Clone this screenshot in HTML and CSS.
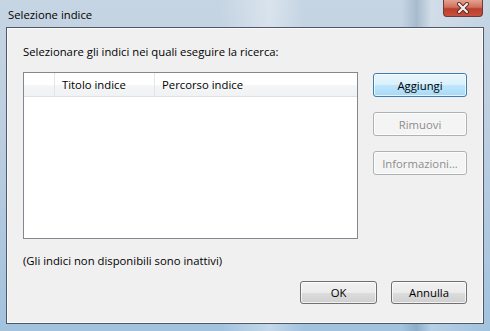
FILE: index.html
```html
<!DOCTYPE html>
<html>
<head>
    <link rel="stylesheet" href="styles.css">
</head>
<body>
    <div class="window">
        <div class="titlebar">
            <span class="title">Selezione indice</span>
            <div class="close-btn">
                <svg width="16" height="12" viewBox="0 0 16 12">
                    <path d="M4 2 L12 10 M12 2 L4 10" stroke="#5a2a2a" stroke-width="4" stroke-linecap="round"/>
                    <path d="M4 2 L12 10 M12 2 L4 10" stroke="#f4eeee" stroke-width="2.2" stroke-linecap="round"/>
                </svg>
            </div>
        </div>
        <div class="client">
            <div class="prompt">Selezionare gli indici nei quali eseguire la ricerca:</div>
            <div class="main">
                <div class="list">
                    <div class="list-header">
                        <div class="col col-check"></div>
                        <div class="col col-title">Titolo indice</div>
                        <div class="col col-path">Percorso indice</div>
                    </div>
                </div>
                <div class="side">
                    <button class="btn default">Aggiungi</button>
                    <button class="btn" disabled>Rimuovi</button>
                    <button class="btn" disabled>Informazioni...</button>
                </div>
            </div>
            <div class="note">(Gli indici non disponibili sono inattivi)</div>
            <div class="footer">
                <button class="btn btn-ok">OK</button>
                <button class="btn btn-cancel">Annulla</button>
            </div>
        </div>
    </div>
</body>
</html>
```

FILE: styles.css
```css
body {
    margin: 0;
    font-family: "Open Sans", "Noto Sans", sans-serif;
    font-size: 11.3px;
    color: #000;
}

.window {
    width: 490px;
    height: 331px;
    box-sizing: border-box;
    display: flex;
    flex-direction: column;
    padding: 0 6px 7px 6px;
    background:
        linear-gradient(90deg, rgba(255,255,255,0) 0%, rgba(255,255,255,0) 45%, rgba(255,255,255,0.35) 55%, rgba(255,255,255,0) 62%, rgba(255,255,255,0) 82%, rgba(80,110,140,0.25) 85%, rgba(255,255,255,0.2) 88%, rgba(255,255,255,0) 100%),
        linear-gradient(180deg, #c6d5e3 0%, #bccee0 40%, #a2c2de 100%);
}

.titlebar {
    height: 27px;
    display: flex;
    justify-content: space-between;
    align-items: flex-start;
}

.title {
    margin-top: 7px;
    margin-left: 2px;
    color: #000;
}

.close-btn {
    width: 40px;
    height: 17px;
    margin-right: 1px;
    box-sizing: border-box;
    border: 1px solid #6b3a3a;
    border-top: none;
    border-radius: 0 0 4px 4px;
    background: linear-gradient(180deg, #e3a291 0%, #d0705c 45%, #b8402c 55%, #c9503a 100%);
    display: flex;
    justify-content: center;
    align-items: center;
}

.client {
    flex: 1;
    display: flex;
    flex-direction: column;
    padding: 16px 15px 19px 16px;
    background-color: #f0f0f0;
    border: 1px solid #4d5966;
    box-shadow: inset 0 0 0 1px #fafafa;
}

.prompt,
.note {
    line-height: 15px;
}

.main {
    display: flex;
    gap: 15px;
    margin-top: 13px;
}

.list {
    width: 335px;
    height: 167px;
    box-sizing: border-box;
    background-color: #fff;
    border: 1px solid #828790;
}

.list-header {
    display: flex;
    height: 23px;
    background: linear-gradient(180deg, #ffffff 0%, #ffffff 50%, #f4f5f7 55%, #f1f2f4 100%);
    border-bottom: 1px solid #dfe0e3;
}

.col {
    box-sizing: border-box;
    line-height: 23px;
    padding-left: 7px;
    border-right: 1px solid #e4e5e8;
}

.col-check {
    width: 31px;
}

.col-title {
    width: 100px;
}

.col-path {
    width: 90px;
    border-right: none;
}

.side {
    display: flex;
    flex-direction: column;
    gap: 15px;
    margin-top: 1px;
}

.btn {
    width: 94px;
    height: 24px;
    padding: 0;
    font-family: inherit;
    font-size: inherit;
    color: #000;
    border: 1px solid #707070;
    border-radius: 3px;
    background: linear-gradient(180deg, #f2f2f2 0%, #ebebeb 50%, #dddddd 51%, #cfcfcf 100%);
    box-shadow: inset 0 0 0 1px rgba(255,255,255,0.7);
}

.btn.default {
    border-color: #3c7fb1;
    background: linear-gradient(180deg, #eaf6fd 0%, #d9f0fc 50%, #bee6fd 51%, #a7d9f5 100%);
}

.btn:disabled {
    color: #8d8d8d;
    border-color: #adb2b5;
    background: #f4f4f4;
    box-shadow: inset 0 0 0 1px #fcfcfc;
}

.note {
    margin-top: 14px;
}

.footer {
    margin-top: auto;
    margin-right: 1px;
    display: flex;
    justify-content: flex-end;
    gap: 14px;
}

.btn-ok {
    width: 77px;
    height: 23px;
}

.btn-cancel {
    width: 76px;
    height: 23px;
}
```
